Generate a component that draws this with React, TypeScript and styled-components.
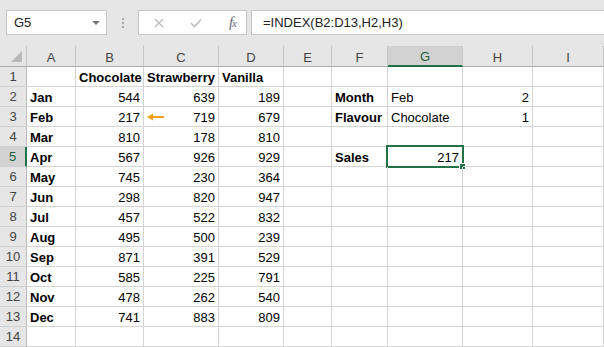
import React from 'react';
import styled, { createGlobalStyle } from 'styled-components';

const GREEN = '#217346';
const COL_WIDTHS = [49, 68, 75, 65, 48, 56, 75, 70, 71];
const LETTERS = ['A', 'B', 'C', 'D', 'E', 'F', 'G', 'H', 'I'];
const ACTIVE_COL = 6;
const ACTIVE_ROW = 5;

type CellData = { text?: string; bold?: boolean; num?: boolean; arrow?: boolean; selected?: boolean };

const sales: [string, number, number, number][] = [
  ['Jan', 544, 639, 189],
  ['Feb', 217, 719, 679],
  ['Mar', 810, 178, 810],
  ['Apr', 567, 926, 929],
  ['May', 745, 230, 364],
  ['Jun', 298, 820, 947],
  ['Jul', 457, 522, 832],
  ['Aug', 495, 500, 239],
  ['Sep', 871, 391, 529],
  ['Oct', 585, 225, 791],
  ['Nov', 478, 262, 540],
  ['Dec', 741, 883, 809],
];

const buildRows = (): CellData[][] => {
  const rows: CellData[][] = [];
  rows.push([
    {},
    { text: 'Chocolate', bold: true },
    { text: 'Strawberry', bold: true },
    { text: 'Vanilla', bold: true },
  ]);
  sales.forEach(([m, a, b, c]) => {
    rows.push([
      { text: m, bold: true },
      { text: String(a), num: true },
      { text: String(b), num: true },
      { text: String(c), num: true },
    ]);
  });
  rows.push([]);
  // C3 gets the arrow
  rows[2][2].arrow = true;
  // lookup block in F:H
  rows[1][5] = { text: 'Month', bold: true };
  rows[1][6] = { text: 'Feb' };
  rows[1][7] = { text: '2', num: true };
  rows[2][5] = { text: 'Flavour', bold: true };
  rows[2][6] = { text: 'Chocolate' };
  rows[2][7] = { text: '1', num: true };
  rows[4][5] = { text: 'Sales', bold: true };
  rows[4][6] = { text: '217', num: true, selected: true };
  return rows;
};

const GlobalStyle = createGlobalStyle`
  html, body {
    margin: 0;
    padding: 0;
    background: #ffffff;
    overflow: hidden;
  }
  body {
    font-family: "Liberation Sans", Arial, sans-serif;
  }
`;

const Window = styled.div`
  width: 604px;
  height: 347px;
  display: flex;
  flex-direction: column;
  background: #e6e6e6;
  overflow: hidden;
`;

const Toolbar = styled.div`
  height: 46px;
  display: flex;
  align-items: center;
  padding-left: 6px;
  box-sizing: border-box;
  flex-shrink: 0;
  padding-bottom: 10px;
  padding-top: 9px;
`;

const Box = styled.div`
  height: 25px;
  box-sizing: border-box;
  background: #ffffff;
  border: 1px solid #c6c6c6;
  display: flex;
  align-items: center;
`;

const NameBox = styled(Box)`
  width: 101px;
  padding: 0 6px 0 7px;
  justify-content: space-between;
  font-size: 13px;
  color: #222;
`;

const Caret = styled.span`
  width: 0;
  height: 0;
  border-left: 4px solid transparent;
  border-right: 4px solid transparent;
  border-top: 4px solid #7a7a7a;
`;

const Grip = styled.div`
  width: 31px;
  display: flex;
  flex-direction: column;
  align-items: center;
  gap: 2px;
  & span {
    width: 2px;
    height: 2px;
    background: #a8a8a8;
  }
`;

const FxBox = styled(Box)`
  width: 109px;
  padding: 0 10px 0 15px;
  justify-content: space-between;
`;

const FxLabel = styled.span`
  font-family: "Liberation Serif", "Times New Roman", serif;
  font-style: italic;
  font-size: 15px;
  color: #6b6878;
  letter-spacing: -1px;
  & small {
    font-size: 11px;
  }
`;

const FormulaBox = styled(Box)`
  flex: 1;
  margin-left: 4px;
  border-right: none;
  padding-left: 11px;
  font-size: 13px;
  color: #222;
`;

const Sheet = styled.div`
  display: grid;
  grid-template-columns: 27px ${COL_WIDTHS.map((w) => `${w}px`).join(' ')};
  grid-auto-rows: 20px;
  grid-template-rows: 21px;
  background: #ffffff;
`;

const Corner = styled.div`
  position: relative;
  background: #e6e6e6;
  border-right: 1px solid #c8c8c8;
  border-bottom: 1px solid #ababab;
  display: flex;
  align-items: flex-end;
  justify-content: flex-end;
  padding: 0 4px 4px 0;
  box-sizing: border-box;
`;

const ColHeader = styled.div<{ $active?: boolean }>`
  background: ${(p) => (p.$active ? '#d2d2d2' : '#e6e6e6')};
  border-right: 1px solid #c8c8c8;
  border-bottom: ${(p) => (p.$active ? `2px solid ${GREEN}` : '1px solid #ababab')};
  box-sizing: border-box;
  display: flex;
  align-items: center;
  justify-content: center;
  padding-top: 2px;
  font-size: 13px;
  color: ${(p) => (p.$active ? '#1e5e3a' : '#444')};
`;

const RowHeader = styled.div<{ $active?: boolean }>`
  background: ${(p) => (p.$active ? '#d2d2d2' : '#e6e6e6')};
  border-right: ${(p) => (p.$active ? `2px solid ${GREEN}` : '1px solid #bdbdbd')};
  border-bottom: 1px solid #d0d0d0;
  box-sizing: border-box;
  display: flex;
  align-items: center;
  justify-content: center;
  font-size: 13px;
  color: ${(p) => (p.$active ? '#1e5e3a' : '#444')};
`;

const Cell = styled.div<{ $bold?: boolean; $num?: boolean; $split?: boolean }>`
  position: relative;
  border-right: 1px solid #d4d4d4;
  border-bottom: 1px solid #d4d4d4;
  box-sizing: border-box;
  display: flex;
  align-items: center;
  justify-content: ${(p) => (p.$split ? 'space-between' : p.$num ? 'flex-end' : 'flex-start')};
  padding: 1px 3px 0 3px;
  font-size: 13px;
  font-weight: ${(p) => (p.$bold ? 700 : 400)};
  color: #000;
  white-space: nowrap;
`;

const Selection = styled.div`
  position: absolute;
  top: -2px;
  left: -2px;
  right: -2px;
  bottom: -2px;
  border: 2px solid ${GREEN};
  pointer-events: none;
`;

const FillHandle = styled.div`
  position: absolute;
  right: -4px;
  bottom: -4px;
  width: 5px;
  height: 5px;
  background: ${GREEN};
  border: 1px solid #ffffff;
`;

const CrossIcon = () => (
  <svg width="10" height="10" viewBox="0 0 10 10">
    <path d="M1 1 L9 9 M9 1 L1 9" stroke="#bdbdbd" strokeWidth="1.4" fill="none" />
  </svg>
);

const CheckIcon = () => (
  <svg width="12" height="10" viewBox="0 0 12 10">
    <path d="M1 5 L4.5 8.5 L11 1.5" stroke="#bdbdbd" strokeWidth="1.6" fill="none" />
  </svg>
);

const CornerTriangle = () => (
  <svg width="11" height="11" viewBox="0 0 11 11">
    <polygon points="11,0 11,11 0,11" fill="#b8b8b8" />
  </svg>
);

const ArrowLeft = () => (
  <svg width="18" height="8" viewBox="0 0 18 8">
    <path d="M4 4 H17" stroke="#f5a01a" strokeWidth="2" />
    <polygon points="0,4 6,0.5 6,7.5" fill="#f5a01a" />
  </svg>
);

const App = () => {
  const rows = buildRows();

  return (
    <>
      <GlobalStyle />
      <Window>
        <Toolbar>
          <NameBox>
            G5
            <Caret />
          </NameBox>
          <Grip>
            <span />
            <span />
            <span />
          </Grip>
          <FxBox>
            <CrossIcon />
            <CheckIcon />
            <FxLabel>
              f<small>x</small>
            </FxLabel>
          </FxBox>
          <FormulaBox>=INDEX(B2:D13,H2,H3)</FormulaBox>
        </Toolbar>
        <Sheet>
          <Corner>
            <CornerTriangle />
          </Corner>
          {LETTERS.map((l, i) => (
            <ColHeader key={l} $active={i === ACTIVE_COL}>
              {l}
            </ColHeader>
          ))}
          {rows.map((row, r) => (
            <React.Fragment key={r}>
              <RowHeader $active={r + 1 === ACTIVE_ROW}>{r + 1}</RowHeader>
              {LETTERS.map((l, c) => {
                const cell = row[c] || {};
                return (
                  <Cell key={l} $bold={cell.bold} $num={cell.num} $split={cell.arrow}>
                    {cell.arrow && <ArrowLeft />}
                    {cell.text}
                    {cell.selected && (
                      <Selection>
                        <FillHandle />
                      </Selection>
                    )}
                  </Cell>
                );
              })}
            </React.Fragment>
          ))}
        </Sheet>
      </Window>
    </>
  );
};

export default App;
